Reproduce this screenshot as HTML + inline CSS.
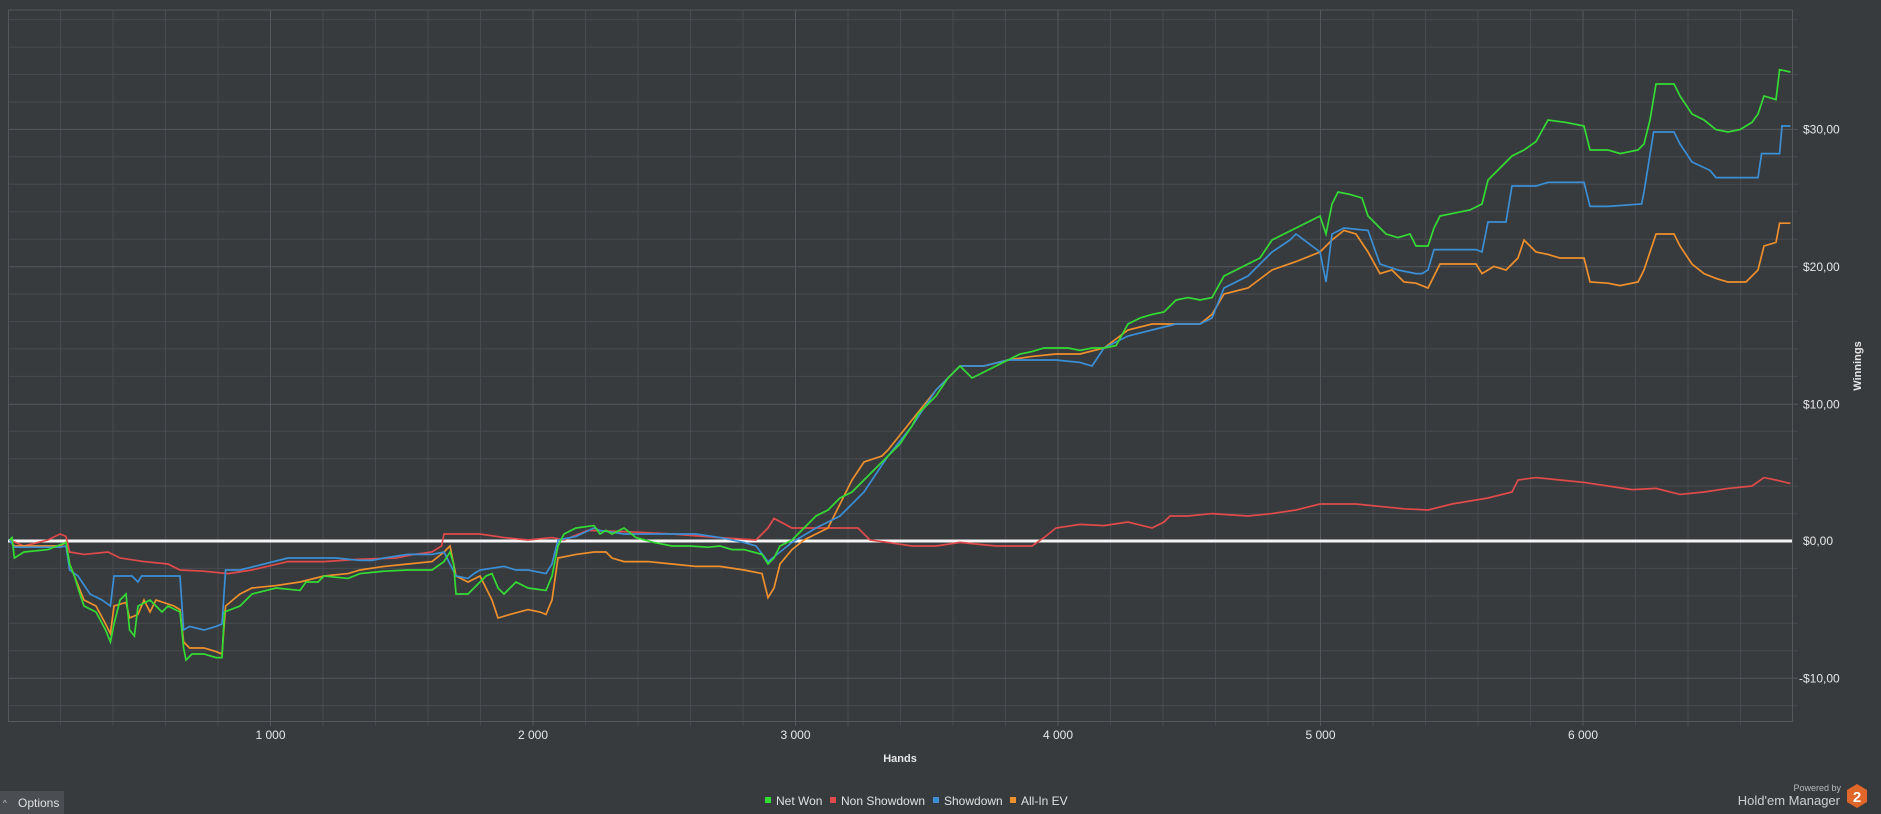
<!DOCTYPE html>
<html><head><meta charset="utf-8"><style>
html,body{margin:0;padding:0;background:#383b3e;width:1881px;height:814px;overflow:hidden;font-family:"Liberation Sans",sans-serif;}
svg{position:absolute;left:0;top:0}
</style></head><body>
<svg width="1881" height="814" viewBox="0 0 1881 814" xmlns="http://www.w3.org/2000/svg">
<rect width="1881" height="814" fill="#383b3e"/>
<g stroke="#474a4e" stroke-width="1" fill="none">
<path d="M8 19.6H1798M8 47.1H1798M8 74.5H1798M8 102H1798M8 156.8H1798M8 184.3H1798M8 211.7H1798M8 239.2H1798M8 294H1798M8 321.5H1798M8 348.9H1798M8 376.4H1798M8 431.2H1798M8 458.7H1798M8 486.1H1798M8 513.6H1798M8 568.4H1798M8 595.9H1798M8 623.3H1798M8 650.8H1798M8 705.6H1798"/>
<path d="M60.5 10V726M113 10V726M165.5 10V726M218 10V726M323 10V726M375.5 10V726M428 10V726M480.5 10V726M585.5 10V726M638 10V726M690.5 10V726M743 10V726M848 10V726M900.5 10V726M953 10V726M1005.5 10V726M1110.5 10V726M1163 10V726M1215.5 10V726M1268 10V726M1373 10V726M1425.5 10V726M1478 10V726M1530.5 10V726M1635.5 10V726M1688 10V726M1740.5 10V726"/>
</g>
<g stroke="#54575b" stroke-width="1" fill="none">
<path d="M8 129.4H1798M8 266.8H1798M8 404.2H1798M8 678.2H1798"/>
<path d="M270.5 10V726M533 10V726M795.5 10V726M1058 10V726M1320.5 10V726M1583 10V726"/>
<path d="M8.5 10V721.5H1792.5V10H8.5"/>
</g>
<line x1="8" y1="541" x2="1792" y2="541" stroke="#f4f4f4" stroke-width="3"/>
<g transform="scale(1.2)" fill="none" stroke-width="1.4" stroke-linejoin="miter">
<polyline stroke="#e04a4a" points="8,450 20,455 40,450 50,445 55,447 58,460 70,462 90,460 100,465 120,468 140,470 150,475 170,476 190,478 210,475 240,468 270,468 300,466 330,465 345,462 360,460 368,455 370,445 380,445 400,445 420,448 440,450 460,448 470,450 490,442 520,443 560,445 600,448 630,450 640,440 645,432 660,440 680,440 700,440 715,440 720,445 725,450 740,452 760,455 780,455 800,452 830,455 860,455 870,448 880,440 900,437 920,438 940,435 960,440 970,435 975,430 990,430 1010,428 1040,430 1060,428 1080,425 1100,420 1130,420 1150,422 1170,424 1190,425 1210,420 1240,415 1260,410 1265,400 1280,398 1300,400 1320,402 1340,405 1360,408 1380,407 1400,412 1420,410 1440,407 1460,405 1470,398 1480,400 1492,403"/>
<polyline stroke="#f0902c" points="8,450 12,455 50,455 55,452 58,470 62,480 70,500 80,505 88,520 92,528 95,505 105,502 108,515 115,512 120,500 125,510 130,500 145,505 150,508 153,535 158,540 170,540 180,543 185,545 188,505 200,495 210,490 230,488 250,485 270,480 290,478 300,475 320,472 340,470 360,468 370,460 375,455 380,480 390,485 400,480 410,500 415,515 425,512 440,508 450,510 455,512 460,500 465,465 480,462 495,460 505,460 510,465 520,468 540,468 560,470 580,472 600,472 620,475 635,478 640,498 645,490 650,470 660,458 670,450 690,440 700,420 710,400 720,385 735,380 740,375 760,350 780,325 800,305 820,305 840,300 860,297 880,295 900,295 920,290 940,275 960,270 980,270 1000,270 1010,262 1020,245 1040,240 1060,225 1080,218 1100,210 1110,200 1120,192 1130,195 1140,210 1150,228 1160,225 1170,235 1180,236 1190,240 1200,220 1230,220 1235,228 1245,222 1255,225 1265,215 1270,200 1280,210 1290,212 1300,215 1320,215 1325,235 1340,236 1350,238 1365,235 1370,225 1380,195 1395,195 1400,205 1410,220 1420,228 1430,232 1440,235 1455,235 1465,225 1470,205 1480,202 1483,186 1492,186"/>
<polyline stroke="#3a8fd6" points="8,450 12,456 50,456 55,455 58,475 65,480 75,495 85,500 92,505 95,480 100,480 110,480 115,485 118,480 125,480 130,480 150,480 153,525 158,522 170,525 180,522 185,520 188,475 200,475 220,470 240,465 260,465 280,465 300,467 310,467 320,465 340,462 360,462 370,460 380,480 390,482 395,478 400,475 420,472 430,475 440,475 455,478 460,470 465,450 480,447 495,440 500,442 520,445 540,445 560,445 580,445 600,448 620,452 630,455 640,468 650,460 660,452 680,440 700,430 720,410 740,380 760,355 780,325 800,305 820,305 840,300 860,300 880,300 900,302 910,305 920,290 940,280 960,275 980,270 1000,270 1010,265 1020,240 1040,230 1060,210 1075,200 1080,195 1100,210 1105,235 1110,195 1120,190 1140,192 1150,220 1165,225 1180,228 1185,228 1190,225 1195,208 1230,208 1235,210 1240,185 1255,185 1260,155 1280,155 1290,152 1320,152 1325,172 1340,172 1368,170 1370,160 1378,110 1395,110 1400,120 1410,135 1425,142 1430,148 1465,148 1468,128 1483,128 1485,105 1492,105"/>
<polyline stroke="#33dd33" points="8,450 10,448 12,465 20,460 40,458 55,452 58,470 62,480 65,490 70,505 80,510 88,525 92,535 95,520 100,500 105,495 108,525 112,530 115,505 125,500 130,505 135,510 140,505 150,510 153,540 155,550 160,545 170,545 180,548 185,548 187,510 200,505 210,495 230,490 250,492 255,485 265,485 270,480 290,482 300,478 320,476 340,475 360,475 370,468 375,460 378,470 380,495 390,495 395,490 400,485 405,480 410,478 415,490 420,495 430,485 440,490 455,492 460,480 465,455 470,445 480,440 495,438 500,445 505,442 510,445 520,440 530,448 545,452 560,455 575,455 590,456 600,455 610,458 620,458 635,462 640,470 645,465 650,455 660,450 670,440 680,430 690,425 700,415 710,410 720,400 730,390 740,380 750,370 760,355 765,345 770,340 780,330 790,315 800,305 810,315 820,310 830,305 840,300 850,295 860,293 870,290 880,290 890,290 900,292 910,290 920,290 930,288 940,270 950,265 960,262 970,260 980,250 990,248 1000,250 1010,248 1020,230 1030,225 1040,220 1050,215 1060,200 1070,195 1080,190 1090,185 1100,180 1105,195 1110,170 1115,160 1125,162 1135,165 1140,180 1145,185 1155,195 1165,198 1175,195 1180,205 1190,205 1195,190 1200,180 1210,178 1225,175 1235,170 1240,150 1250,140 1260,130 1270,125 1280,118 1290,100 1305,102 1320,105 1325,125 1340,125 1350,128 1365,125 1370,120 1375,100 1380,70 1395,70 1400,80 1410,95 1420,100 1430,108 1440,110 1450,108 1460,102 1465,95 1470,80 1480,83 1483,58 1492,60"/>
</g>
<g fill="#e6e6e6" font-size="12" font-family="Liberation Sans, sans-serif">
<text x="1803" y="133.5">$30,00</text>
<text x="1803" y="271">$20,00</text>
<text x="1803" y="408.5">$10,00</text>
<text x="1803" y="545">$0,00</text>
<text x="1799" y="682.5">-$10,00</text>
<g text-anchor="middle">
<text x="270.5" y="739">1 000</text>
<text x="533" y="739">2 000</text>
<text x="795.5" y="739">3 000</text>
<text x="1058" y="739">4 000</text>
<text x="1320.5" y="739">5 000</text>
<text x="1583" y="739">6 000</text>
<text x="900" y="762" font-weight="bold" font-size="11">Hands</text>
<text transform="translate(1861,366) rotate(-90)" font-weight="bold" font-size="11">Winnings</text>
</g>
</g>
<rect x="0" y="791" width="64" height="23" fill="#4a4d51"/>
<text x="3" y="806" fill="#cfcfcf" font-size="8">^</text>
<text x="18" y="807" fill="#e0e0e0" font-size="12">Options</text>
<g font-size="12" fill="#e0e0e0">
<rect x="765" y="797" width="6" height="6" fill="#33dd33"/><text x="776" y="805">Net Won</text>
<rect x="830" y="797" width="6" height="6" fill="#e04a4a"/><text x="841" y="805">Non Showdown</text>
<rect x="933" y="797" width="6" height="6" fill="#3a8fd6"/><text x="944" y="805">Showdown</text>
<rect x="1010" y="797" width="6" height="6" fill="#f0902c"/><text x="1021" y="805">All-In EV</text>
</g>
<text x="1841" y="791" fill="#b8b8b8" font-size="9" text-anchor="end">Powered by</text>
<text x="1840" y="805" fill="#cfcfcf" font-size="13" text-anchor="end">Hold'em Manager</text>
<polygon points="1857,784 1867,790 1867,802 1857,808 1847,802 1847,790" fill="#e0662a"/>
<text x="1857" y="802" fill="#fff" font-size="15" font-weight="bold" text-anchor="middle">2</text>
</svg>
</body></html>
